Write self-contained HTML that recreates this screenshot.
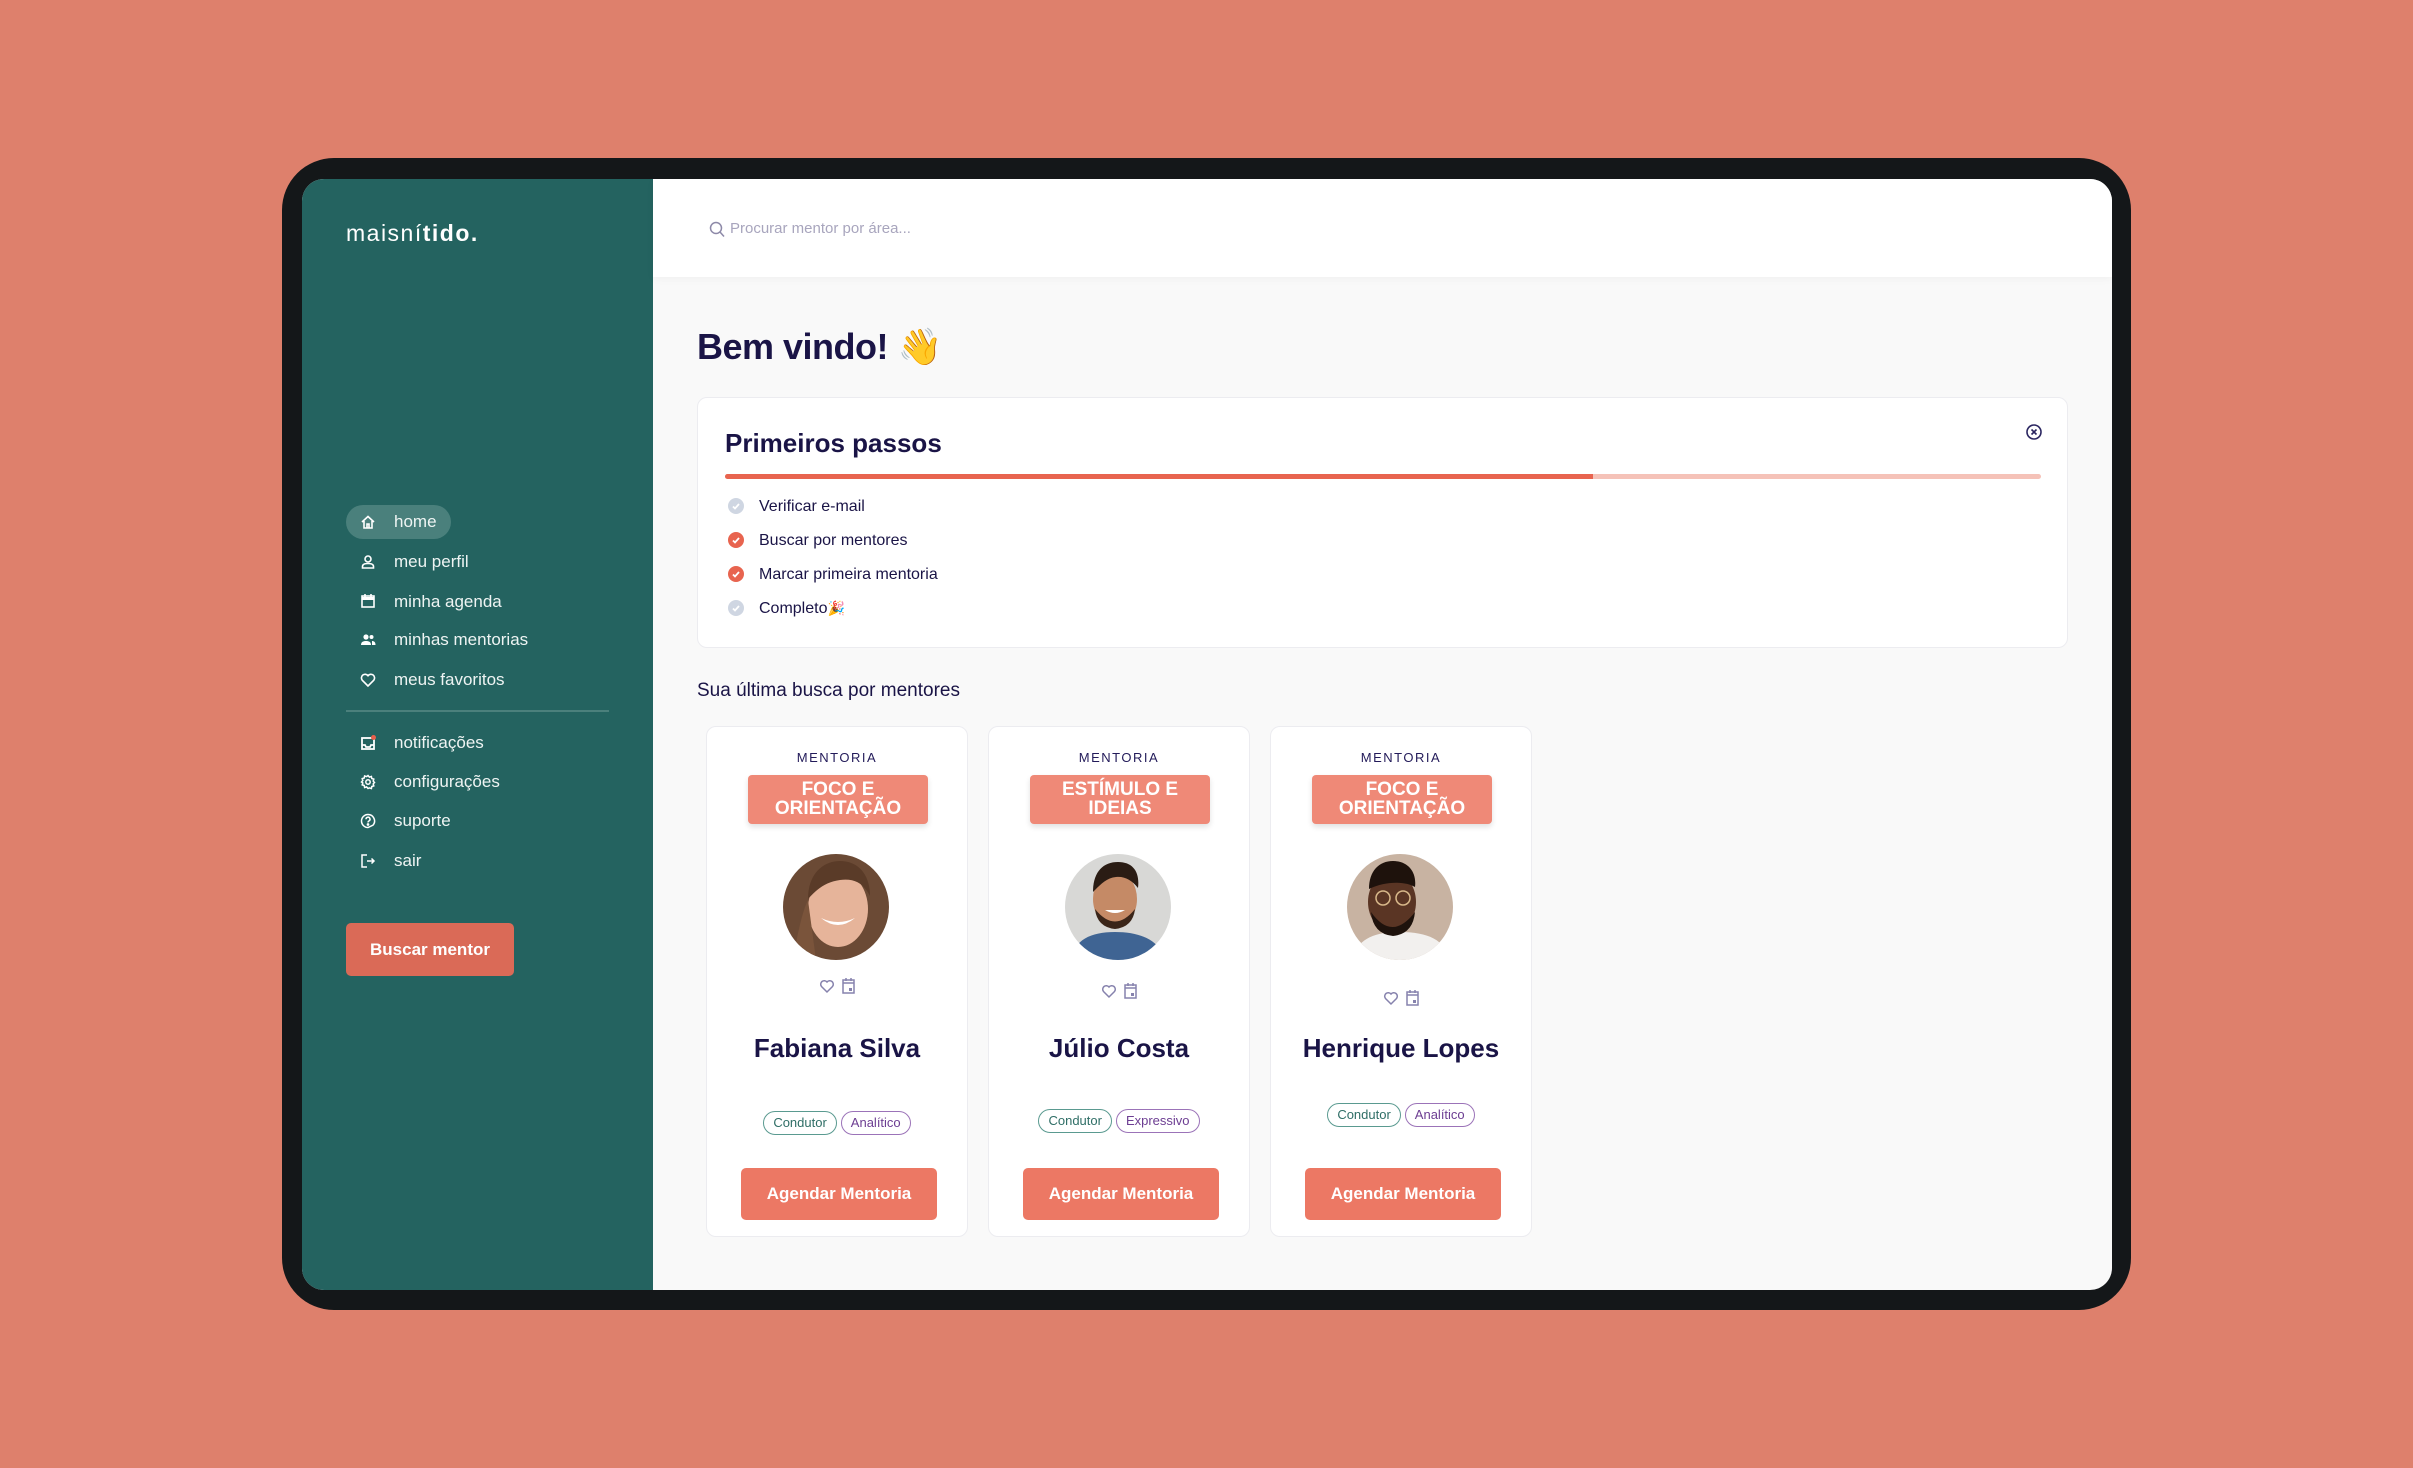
<!DOCTYPE html>
<html><head><meta charset="utf-8"><style>
*{margin:0;padding:0;box-sizing:border-box}
body{width:2413px;height:1468px;background:#de806c;font-family:"Liberation Sans",sans-serif;position:relative;overflow:hidden}
.a{position:absolute}
.frame{left:282px;top:158px;width:1849px;height:1152px;background:#141719;border-radius:52px}
.screen{left:302px;top:179px;width:1810px;height:1111px;background:#f9f9f9;border-radius:22px;overflow:hidden}
.side{left:0;top:0;width:351px;height:1111px;background:#246360}
.top{left:351px;top:0;width:1459px;height:98px;background:#fff;box-shadow:0 2px 8px rgba(0,0,0,.04)}
.nav{color:#eef4f3;font-size:17px;left:92px}
.ic{left:58px;width:16px;height:16px}
.navy{color:#1a1446}
.card{background:#fff;border:1px solid #ececf0;border-radius:10px}
.mc{width:262px;height:511px;top:547px}
.mc .m{position:absolute;top:23px;width:100%;text-align:center;font-size:13px;letter-spacing:1.5px;color:#231b5a}
.mc .b{position:absolute;left:41px;top:48px;width:180px;height:49px;background:#ef8977;border-radius:4px;color:#fff;font-size:19px;font-weight:bold;line-height:19px;text-align:center;padding-top:5px;box-shadow:0 3px 6px rgba(0,0,0,.12)}
.mc .n{position:absolute;width:100%;text-align:center;font-size:26px;font-weight:bold;color:#1a1446}
.mc .btn{position:absolute;left:34px;top:441px;width:196px;height:52px;background:#ec7864;border-radius:5px;color:#fff;font-size:17px;font-weight:bold;text-align:center;line-height:52px}
.tags{position:absolute;width:100%;display:flex;justify-content:center;gap:4px}
.tag{height:24px;border-radius:12px;font-size:13px;line-height:22px;padding:0 9px;border:1px solid}
.t1{border-color:#5a9a90;color:#2f6e66}.t2{border-color:#9b73b8;color:#6c3d92}
.av{position:absolute;left:76px;top:127px;width:106px;height:106px;border-radius:50%;overflow:hidden}
.chk{left:426px;width:16px;height:16px;border-radius:50%}
.ck{font-size:16px;left:457px}
</style></head><body>
<div class="a frame"></div>
<div class="a screen">
 <div class="a side">
  <div class="a" style="left:44px;top:41px;color:#fff;font-size:23px;letter-spacing:1.5px">maisní<span style="font-weight:bold">tido.</span></div>
  <div class="a" style="left:44px;top:326px;width:105px;height:34px;border-radius:17px;background:#4a807c"></div>
  <svg class="a ic" style="top:335px" viewBox="0 0 16 16" fill="none" stroke="#fff" stroke-width="1.6"><path d="M2 8L8 2.5 14 8M4 7v7h8V7M7 14v-4h2v4"/></svg>
  <div class="a nav" style="top:333px">home</div>
  <svg class="a ic" style="top:375px" viewBox="0 0 16 16" fill="none" stroke="#fff" stroke-width="1.6"><circle cx="8" cy="5" r="3"/><path d="M2.5 14v-1.5c0-2 2-3 5.5-3s5.5 1 5.5 3V14z"/></svg>
  <div class="a nav" style="top:373px">meu perfil</div>
  <svg class="a ic" style="top:414px" viewBox="0 0 16 16" fill="none" stroke="#fff" stroke-width="1.6"><rect x="2" y="3" width="12" height="11"/><path d="M2 5.5h12" stroke-width="3"/><path d="M5 1v3M11 1v3"/></svg>
  <div class="a nav" style="top:413px">minha agenda</div>
  <svg class="a ic" style="top:453px" viewBox="0 0 16 16" fill="#fff"><circle cx="6" cy="5" r="2.6"/><path d="M1 13c0-3 2-4 5-4s5 1 5 4z"/><circle cx="11.5" cy="5" r="2"/><path d="M12 9c2 0 3.5 1 3.5 4H12z"/></svg>
  <div class="a nav" style="top:451px">minhas mentorias</div>
  <svg class="a ic" style="top:493px" viewBox="0 0 16 16" fill="none" stroke="#fff" stroke-width="1.6"><path d="M8 14L2.2 8.2A3.3 3.3 0 018 3.7a3.3 3.3 0 015.8 4.5z"/></svg>
  <div class="a nav" style="top:491px">meus favoritos</div>
  <div class="a" style="left:44px;top:531px;width:263px;height:2px;background:#4b807c"></div>
  <svg class="a ic" style="top:556px" viewBox="0 0 16 16" fill="none" stroke="#fff" stroke-width="1.8"><rect x="2" y="3" width="12" height="11"/><path d="M2 10h3l1 2h4l1-2h3"/><circle cx="13.5" cy="2.5" r="2.5" fill="#e8604c" stroke="none"/></svg>
  <div class="a nav" style="top:554px">notificações</div>
  <svg class="a ic" style="top:595px" viewBox="0 0 16 16" fill="none" stroke="#fff" stroke-width="1.5"><circle cx="8" cy="8" r="2.2"/><path d="M8 1.5l1.4 1.6 2-.6.4 2 2 .6-.6 2 1.3 1.4-1.3 1.4.6 2-2 .6-.4 2-2-.6L8 14.5l-1.4-1.6-2 .6-.4-2-2-.6.6-2L1.5 8l1.3-1.4-.6-2 2-.6.4-2 2 .6z"/></svg>
  <div class="a nav" style="top:593px">configurações</div>
  <svg class="a ic" style="top:634px" viewBox="0 0 16 16" fill="none" stroke="#fff" stroke-width="1.5"><path d="M8 14.5A6.5 6.5 0 118 1.5a6.5 6.5 0 015 10.7L8 14.5z"/><path d="M6 6.2a2 2 0 113 1.7c-.8.4-1 .9-1 1.6"/><circle cx="8" cy="11.5" r=".6" fill="#fff"/></svg>
  <div class="a nav" style="top:632px">suporte</div>
  <svg class="a ic" style="top:674px" viewBox="0 0 16 16" fill="none" stroke="#fff" stroke-width="1.5"><path d="M7 2H2v12h5M7 8h7M11.5 5.5L14 8l-2.5 2.5"/></svg>
  <div class="a nav" style="top:672px">sair</div>
  <div class="a" style="left:44px;top:744px;width:168px;height:53px;background:#da6a57;border-radius:5px;color:#fff;font-weight:bold;font-size:17px;text-align:center;line-height:53px">Buscar mentor</div>
 </div>
 <div class="a top">
  <svg class="a" style="left:56px;top:42px" width="16" height="17" viewBox="0 0 16 17" fill="none" stroke="#8d89a8" stroke-width="1.5"><circle cx="7" cy="7" r="5.5"/><path d="M11 11l4 4.5"/></svg>
  <div class="a" style="left:77px;top:41px;font-size:15px;color:#a8a5bd">Procurar mentor por área...</div>
 </div>
 <div class="a navy" style="left:395px;top:147px;font-size:36px;font-weight:bold;letter-spacing:-.5px">Bem vindo! <span style="font-family:'Noto Color Emoji',sans-serif">👋</span></div>
 <div class="a card" style="left:395px;top:218px;width:1371px;height:251px"></div>
 <div class="a navy" style="left:423px;top:249px;font-size:26px;font-weight:bold">Primeiros passos</div>
 <svg class="a" style="left:1723px;top:244px" width="18" height="18" viewBox="0 0 18 18" fill="none" stroke="#2a2560" stroke-width="1.6"><circle cx="9" cy="9" r="7"/><path d="M6.5 6.5l5 5M11.5 6.5l-5 5"/></svg>
 <div class="a" style="left:423px;top:295px;width:1316px;height:5px;border-radius:3px;background:#f5c2b8"></div>
 <div class="a" style="left:423px;top:295px;width:868px;height:5px;border-radius:3px 0 0 3px;background:#e8644f"></div>
 <div class="a chk" style="top:319px;background:#cfd6e2"></div>
 <div class="a chk" style="top:353px;background:#e8644f"></div>
 <div class="a chk" style="top:387px;background:#e8644f"></div>
 <div class="a chk" style="top:421px;background:#cfd6e2"></div>
 <svg class="a" style="left:426px;top:319px" width="16" height="120" viewBox="0 0 16 120" fill="none" stroke="#fff" stroke-width="1.8"><path d="M5 8.5l2 2 4-4.5M5 42.5l2 2 4-4.5M5 76.5l2 2 4-4.5M5 110.5l2 2 4-4.5"/></svg>
 <div class="a navy ck" style="top:319px">Verificar e-mail</div>
 <div class="a navy ck" style="top:353px">Buscar por mentores</div>
 <div class="a navy ck" style="top:387px">Marcar primeira mentoria</div>
 <div class="a navy ck" style="top:421px">Completo<span style="font-family:'Noto Color Emoji',sans-serif;font-size:14px">🎉</span></div>
 <div class="a navy" style="left:395px;top:501px;font-size:19px">Sua última busca por mentores</div>

 <div class="a card mc" style="left:404px">
  <div class="m">MENTORIA</div><div class="b">FOCO E<br>ORIENTAÇÃO</div>
  <svg class="av" viewBox="0 0 106 106"><rect width="106" height="106" fill="#6b4a35"/><ellipse cx="55" cy="55" rx="30" ry="38" fill="#e6b49a"/><path d="M25 45c0-25 15-38 32-38s30 12 30 35c-6-12-15-18-30-16-14 2-22 8-32 19z" fill="#5a3b28"/><path d="M38 64q17 14 34 0q-17 8-34 0z" fill="#fff"/><path d="M10 106c5-30 10-50 15-60l8 60z" fill="#7a543b"/></svg>
  <svg class="a" style="left:112px;top:250px" width="40" height="18" viewBox="0 0 40 18" fill="none" stroke="#8682ad" stroke-width="1.5"><path d="M8 15L2.5 9.5A3 3 0 018 5a3 3 0 015.5 4.5z"/><rect x="24" y="3" width="11" height="13"/><path d="M24 6h11M27 1v3M32 1v3"/><rect x="30" y="11" width="3" height="3" fill="#8682ad" stroke="none"/></svg>
  <div class="n" style="top:306px">Fabiana Silva</div>
  <div class="tags" style="top:384px"><span class="tag t1">Condutor</span><span class="tag t2">Analítico</span></div>
  <div class="btn">Agendar Mentoria</div>
 </div>
 <div class="a card mc" style="left:686px">
  <div class="m">MENTORIA</div><div class="b">ESTÍMULO E<br>IDEIAS</div>
  <svg class="av" viewBox="0 0 106 106"><rect width="106" height="106" fill="#d8d8d6"/><path d="M5 106c5-20 20-28 45-28s45 8 50 28z" fill="#3f6493"/><ellipse cx="50" cy="45" rx="22" ry="28" fill="#c58a66"/><path d="M28 38c0-20 10-30 25-30s22 10 20 26c-6-8-14-12-22-11-10 1-16 8-23 15z" fill="#2a1c14"/><path d="M30 55q20 25 40 0q-2 18-20 20q-18-2-20-20z" fill="#3a2519"/><path d="M40 56q10 6 20 0z" fill="#fff"/></svg>
  <svg class="a" style="left:112px;top:255px" width="40" height="18" viewBox="0 0 40 18" fill="none" stroke="#8682ad" stroke-width="1.5"><path d="M8 15L2.5 9.5A3 3 0 018 5a3 3 0 015.5 4.5z"/><rect x="24" y="3" width="11" height="13"/><path d="M24 6h11M27 1v3M32 1v3"/><rect x="30" y="11" width="3" height="3" fill="#8682ad" stroke="none"/></svg>
  <div class="n" style="top:306px">Júlio Costa</div>
  <div class="tags" style="top:382px"><span class="tag t1">Condutor</span><span class="tag t2">Expressivo</span></div>
  <div class="btn">Agendar Mentoria</div>
 </div>
 <div class="a card mc" style="left:968px">
  <div class="m">MENTORIA</div><div class="b">FOCO E<br>ORIENTAÇÃO</div>
  <svg class="av" viewBox="0 0 106 106"><rect width="106" height="106" fill="#c8b3a2"/><path d="M5 106c5-20 20-28 48-28s45 8 50 28z" fill="#f2f0ee"/><ellipse cx="45" cy="48" rx="24" ry="30" fill="#5a3524"/><path d="M22 35c0-18 10-28 24-28s24 10 22 26c-10-6-30-6-46 2z" fill="#1e120c"/><path d="M24 58q21 30 44 0q-2 22-22 24q-20-2-22-24z" fill="#1e120c"/><circle cx="36" cy="44" r="7" fill="none" stroke="#d8b88a" stroke-width="1.5"/><circle cx="56" cy="44" r="7" fill="none" stroke="#d8b88a" stroke-width="1.5"/></svg>
  <svg class="a" style="left:112px;top:262px" width="40" height="18" viewBox="0 0 40 18" fill="none" stroke="#8682ad" stroke-width="1.5"><path d="M8 15L2.5 9.5A3 3 0 018 5a3 3 0 015.5 4.5z"/><rect x="24" y="3" width="11" height="13"/><path d="M24 6h11M27 1v3M32 1v3"/><rect x="30" y="11" width="3" height="3" fill="#8682ad" stroke="none"/></svg>
  <div class="n" style="top:306px">Henrique Lopes</div>
  <div class="tags" style="top:376px"><span class="tag t1">Condutor</span><span class="tag t2">Analítico</span></div>
  <div class="btn">Agendar Mentoria</div>
 </div>
</div>
</body></html>
